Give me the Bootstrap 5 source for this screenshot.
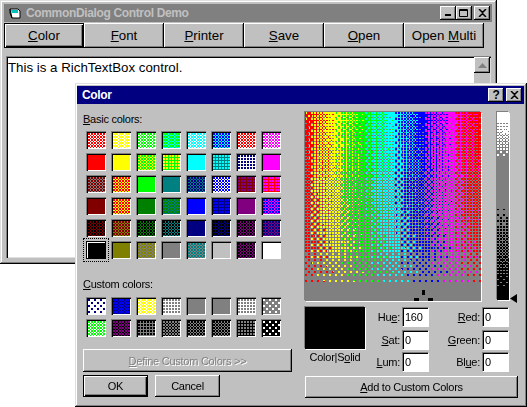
<!DOCTYPE html>
<html lang="en">
<head>
  <meta charset="UTF-8">
  <meta name="viewport" content="width=device-width, initial-scale=1.0">
  <title>CommonDialog Control Demo</title>
  <link href="https://cdn.jsdelivr.net/npm/bootstrap@5.3.3/dist/css/bootstrap.min.css" rel="stylesheet">
  <style>
    body {
      background: #fff;
      font-family: "Liberation Sans", Arial, sans-serif;
      font-size: 11px;
      line-height: 14px;
      color: #000;
      overflow: hidden;
    }
    .win-main, .win-color {
      position: absolute;
      background: #c0c0c0;
      box-shadow: inset -1px -1px 0 #000, inset 1px 1px 0 #dfdfdf, inset -2px -2px 0 #808080, inset 2px 2px 0 #fff;
    }
    .win-main { left: 0; top: 0; width: 497px; height: 264px; padding: 4px; }
    .win-color { left: 75px; top: 83px; width: 452px; height: 324px; padding: 3px 3px 3px 2px; letter-spacing: -.25px; }
    .title-bar { height: 18px; padding: 0 2px 0 5px; font-size: 12px; font-weight: 700; letter-spacing: -.35px; }
    .title-off { background: #808080; color: #c0c0c0; width: 488px; }
    .title-on { background: #000080; color: #fff; }
    .cap-btn {
      width: 16px; height: 14px; background: #c0c0c0; color: #000;
      box-shadow: inset -1px -1px 0 #000, inset 1px 1px 0 #fff, inset -2px -2px 0 #808080;
    }
    .cap-gap { margin-left: 2px; }
    .win-btn.btn {
      --bs-btn-padding-x: 0;
      --bs-btn-padding-y: 0;
      --bs-btn-font-size: 11px;
      --bs-btn-line-height: 14px;
      --bs-btn-color: #000;
      --bs-btn-bg: #c0c0c0;
      --bs-btn-border-width: 0;
      --bs-btn-border-radius: 0;
      box-shadow: inset -1px -1px 0 #000, inset 1px 1px 0 #fff, inset -2px -2px 0 #808080;
    }
    .win-color .win-btn.btn { letter-spacing: -.25px; }
    .win-btn.btn.is-default { box-shadow: inset 0 0 0 1px #000, inset 2px 2px 0 #fff, inset -2px -2px 0 #000, inset -3px -3px 0 #808080; }
    .win-btn.btn:disabled { --bs-btn-disabled-color: #808080; --bs-btn-disabled-bg: #c0c0c0; --bs-btn-disabled-opacity: 1; --bs-btn-disabled-border-color: transparent; text-shadow: 1px 1px 0 #fff; }
    .tool-row { height: 25px; margin-top: 1px; width: 480px; }
    .tool-row .win-btn.btn { width: 80px; height: 25px; --bs-btn-font-size: 13.3px; }
    .rich-box {
      margin: 8px 0 0 2px; height: 202px; width: 485px; background: #fff;
      box-shadow: inset 1px 1px 0 #808080, inset 2px 2px 0 #000, inset -1px -1px 0 #dfdfdf;
      padding: 3px 0 0 2px; font-size: 13.3px; line-height: 17px;
      position: relative;
    }
    .scroll-up {
      position: absolute; right: 1px; top: 1px; width: 16px; height: 16px; background: #c0c0c0;
      box-shadow: inset -1px -1px 0 #000, inset 1px 1px 0 #fff, inset -2px -2px 0 #808080;
    }
    .scroll-track { position: absolute; right: 1px; top: 17px; bottom: 1px; width: 16px; background: #c0c0c0; }
    .dlg-body { padding: 8px 0 0 6px; }
    .col-left { width: 209px; }
    .col-right { width: 213px; margin-left: 13px; }
    .sw-label { height: 14px; }
    .custom-label { margin-top: 18px; }
    .swatch-grid { display: grid; grid-template-columns: repeat(8, 20px); column-gap: 5px; row-gap: 4px; margin-top: 5px; margin-left: 3px; }
    .custom-label + .swatch-grid { margin-top: 6px; }
    .swatch-cell {
      width: 20px; height: 18px; padding: 2px 1px 1px 2px;
      box-shadow: inset 1px 1px 0 #808080, inset 2px 2px 0 #000, inset -1px -1px 0 #fff;
    }
    .swatch-cell.is-current { outline: 1px dotted #000; outline-offset: 2px; box-shadow: inset 0 0 0 1px #000, inset 0 0 0 2px #fff; }
    .swatch-fill { display: block; }
    .define-btn.btn { width: 209px; height: 23px; margin-top: 12px; }
    .btn-line { margin-top: 3px; gap: 7px; }
    .btn-line .win-btn.btn { width: 65px; height: 22px; }
    .picker-row { gap: 16px; }
    .spectrum-wrap { position: relative; width: 176px; height: 189px; box-shadow: -1px -1px 0 #808080, 1px 1px 0 #fff; }
    .spectrum-wrap canvas, .lum-wrap canvas { display: block; }
    .cross { position: absolute; background: #000; }
    .cross-v { left: 117px; top: 178px; width: 3px; height: 5px; }
    .cross-l { left: 109px; top: 186px; width: 5px; height: 3px; }
    .cross-r { left: 123px; top: 186px; width: 5px; height: 3px; }
    .lum-wrap { position: relative; width: 12px; height: 188px; box-shadow: -1px -1px 0 #808080, 1px 1px 0 #fff; }
    .lum-arrow { position: absolute; left: 13px; top: 182px; }
    .solid-col { width: 60px; margin-right: 8px; }
    .solid-box { width: 60px; height: 42px; background: #000; box-shadow: -1px -1px 0 #808080, 1px 1px 0 #fff; }
    .solid-label { margin-top: 1px; text-align: center; white-space: nowrap; }
    .field-row { height: 19px; margin-bottom: 3.5px; }
    .field-lab { text-align: right; margin-right: 2px; padding-top: 3px; white-space: nowrap; }
    .lab-a { width: 27px; }
    .lab-b { width: 52px; }
    .field-box {
      width: 26px; height: 19px; background: #fff; padding: 3px 0 0 3px;
      box-shadow: inset 1px 1px 0 #808080, inset 2px 2px 0 #000, 1px 1px 0 #fff;
    }
    .hsl-grid { margin-top: 6px; }
    .add-btn.btn { width: 213px; height: 22px; margin-top: 1px; }
  </style>
</head>
<body>

  <div class="win-main">
    <div class="title-bar title-off d-flex align-items-center">
      <svg width="13" height="12" viewBox="0 0 13 12" class="flex-shrink-0 me-1">
        <path d="M1 2h8l2 2v7H3z" fill="#fff" stroke="#000"/>
        <path d="M2 3h7v3H3z" fill="#00c0c0"/>
        <path d="M1 2v4l2 5" fill="none" stroke="#000"/>
      </svg>
      <span>CommonDialog Control Demo</span>
      <div class="ms-auto d-flex">
        <div class="cap-btn d-flex align-items-end justify-content-center pb-1"><svg width="7" height="2"><rect width="6" height="2"/></svg></div>
        <div class="cap-btn d-flex align-items-center justify-content-center"><svg width="10" height="9"><path d="M.5.5h8v7h-8zM0 1.500h9" fill="none" stroke="#000"/></svg></div>
        <div class="cap-btn cap-gap d-flex align-items-center justify-content-center"><svg width="9" height="8"><path d="M1 0l3.500 3.500L8 0M1 8l3.500-3.500L8 8" fill="none" stroke="#000" stroke-width="1.500"/></svg></div>
      </div>
    </div>
    <div class="tool-row d-flex">
      <button class="btn win-btn is-default"><u>C</u>olor</button>
      <button class="btn win-btn"><u>F</u>ont</button>
      <button class="btn win-btn"><u>P</u>rinter</button>
      <button class="btn win-btn"><u>S</u>ave</button>
      <button class="btn win-btn"><u>O</u>pen</button>
      <button class="btn win-btn">Open <u>M</u>ulti</button>
    </div>
    <div class="rich-box">
      This is a RichTextBox control.
      <div class="scroll-up d-flex align-items-center justify-content-center"><svg width="9" height="5"><path d="M4.500 0L9 5H0z" fill="#808080"/></svg></div>
      <div class="scroll-track"></div>
    </div>
  </div>

  <div class="win-color">
    <div class="title-bar title-on d-flex align-items-center">
      <span>Color</span>
      <div class="ms-auto d-flex">
        <div class="cap-btn d-flex align-items-center justify-content-center">?</div>
        <div class="cap-btn cap-gap d-flex align-items-center justify-content-center"><svg width="9" height="8"><path d="M1 0l3.500 3.500L8 0M1 8l3.500-3.500L8 8" fill="none" stroke="#000" stroke-width="1.500"/></svg></div>
      </div>
    </div>
    <div class="dlg-body d-flex">
      <div class="col-left">
        <div class="sw-label"><u>B</u>asic colors:</div>
        <div class="swatch-grid" id="basicGrid"></div>
        <div class="sw-label custom-label"><u>C</u>ustom colors:</div>
        <div class="swatch-grid" id="customGrid"></div>
        <button class="btn win-btn define-btn d-block" disabled><u>D</u>efine Custom Colors &gt;&gt;</button>
        <div class="d-flex btn-line">
          <button class="btn win-btn is-default">OK</button>
          <button class="btn win-btn">Cancel</button>
        </div>
      </div>
      <div class="col-right">
        <div class="d-flex picker-row">
          <div class="spectrum-wrap">
            <canvas id="spectrum" width="176" height="189"></canvas>
            <div class="cross cross-v"></div>
            <div class="cross cross-l"></div>
            <div class="cross cross-r"></div>
          </div>
          <div class="lum-wrap">
            <canvas id="lum" width="12" height="188"></canvas>
            <svg class="lum-arrow" width="7" height="9"><path d="M0 4.500L7 0v9z" fill="#000"/></svg>
          </div>
        </div>
        <div class="d-flex hsl-grid">
          <div class="solid-col">
            <div class="solid-box"></div>
            <div class="solid-label">Color|S<u>o</u>lid</div>
          </div>
          <div>
            <div class="field-row d-flex"><div class="field-lab lab-a">Hu<u>e</u>:</div><div class="field-box">160</div><div class="field-lab lab-b"><u>R</u>ed:</div><div class="field-box">0</div></div>
            <div class="field-row d-flex"><div class="field-lab lab-a"><u>S</u>at:</div><div class="field-box">0</div><div class="field-lab lab-b"><u>G</u>reen:</div><div class="field-box">0</div></div>
            <div class="field-row d-flex"><div class="field-lab lab-a"><u>L</u>um:</div><div class="field-box">0</div><div class="field-lab lab-b">Bl<u>u</u>e:</div><div class="field-box">0</div></div>
          </div>
        </div>
        <button class="btn win-btn add-btn d-block"><u>A</u>dd to Custom Colors</button>
      </div>
    </div>
  </div>

  <script>
    const R = "#ff0000", Y = "#ffff00", L = "#00ff00", C = "#00ffff", B = "#0000ff", M = "#ff00ff";
    const m = "#800000", o = "#808000", g = "#008000", t = "#008080", n = "#000080", p = "#800080";
    const W = "#ffffff", S = "#c0c0c0", G = "#808080", K = "#000000";

    // [base, second, pattern] c = checker, d = one dot in four, s = sparse dots
    const basic = [
      [R,W,"c"],[Y,W,"c"],[L,W,"c"],[L,C,"c"],[C,W,"c"],[B,C,"c"],[R,W,"c"],[M,W,"c"],
      [R],[Y],[L,Y,"c"],[L,Y,"d"],[C],[t,C,"d"],[W,n,"d"],[M],
      [m,G,"c"],[R,Y,"c"],[L],[t],[n,t,"c"],[B,W,"c"],[m,p,"d"],[R,M,"d"],
      [m],[R,Y,"c"],[g],[g,t,"c"],[B],[n,B,"d"],[p],[B,M,"c"],
      [K,m,"c"],[m,o,"c"],[K,g,"c"],[K,t,"c"],[n],[K,n,"c"],[K,p,"c"],[n,p,"c"],
      [K],[o],[o,G,"c"],[G],[t,G,"c"],[S],[K,p,"c"],[W]
    ];
    const custom = [
      [W,n,"s"],[B,n,"c"],[Y,W,"c"],[W,G,"d"],[G],[G],[W,G,"d"],[G,W,"s"],
      [L,W,"c"],[p,K,"c"],[G,K,"d"],[G,K,"c"],[K,G,"c"],[K,G,"c"],[K,G,"d"],[K,W,"s"]
    ];

    // the screenshot was resized, so the dither cells come out about 1.5px wide
    const cellOf = v => Math.floor(v / 1.5);

    function fillGrid(id, list, currentIdx) {
      const grid = document.getElementById(id);
      list.forEach((sw, i) => {
        const cell = document.createElement("div");
        cell.className = "swatch-cell" + (i === currentIdx ? " is-current" : "");
        const cv = document.createElement("canvas");
        cv.className = "swatch-fill";
        cv.width = 17;
        cv.height = 15;
        const ctx = cv.getContext("2d");
        for (let y = 0; y < 15; y++) {
          for (let x = 0; x < 17; x++) {
            const cx = cellOf(x), cy = cellOf(y);
            let second = false;
            if (sw[2] === "c") second = (cx + cy) % 2 === 1;
            if (sw[2] === "d") second = cx % 2 === 0 && cy % 2 === 0;
            if (sw[2] === "s") second = cx % 2 === 0 && cy % 2 === 0 && (cx + cy) % 4 === 0;
            ctx.fillStyle = second ? sw[1] : sw[0];
            ctx.fillRect(x, y, 1, 1);
          }
        }
        cell.appendChild(cv);
        grid.appendChild(cell);
      });
    }
    fillGrid("basicGrid", basic, 40);
    fillGrid("customGrid", custom, -1);

    const bayer = [[0,8,2,10],[12,4,14,6],[3,11,1,9],[15,7,13,5]];
    const hues = [[255,0,0],[255,255,0],[0,255,0],[0,255,255],[0,0,255],[255,0,255],[255,0,0]];

    function drawSpectrum() {
      const cv = document.getElementById("spectrum");
      const ctx = cv.getContext("2d");
      const img = ctx.createImageData(cv.width, cv.height);
      for (let y = 0; y < cv.height; y++) {
        for (let x = 0; x < cv.width; x++) {
          const th = (bayer[cellOf(y) % 4][cellOf(x) % 4] + .5) / 16;
          const pos = x / cv.width * 6;
          const i = Math.floor(pos);
          const sat = y > 181 ? 0 : Math.min(1, .96 - y / 185);
          let col = [128, 128, 128];
          if (sat > th) col = (pos - i) > th / sat ? hues[i + 1] : hues[i];
          const k = (y * cv.width + x) * 4;
          img.data[k] = col[0]; img.data[k + 1] = col[1]; img.data[k + 2] = col[2]; img.data[k + 3] = 255;
        }
      }
      ctx.putImageData(img, 0, 0);
    }

    function drawLum() {
      const cv = document.getElementById("lum");
      const ctx = cv.getContext("2d");
      for (let y = 0; y < cv.height; y++) {
        const v = 1 - y / cv.height;
        for (let x = 0; x < cv.width; x++) {
          const th = (bayer[cellOf(y) % 4][cellOf(x) % 4] + .5) / 16;
          let col = "#808080";
          if (v > .75) col = (v - .75) * 4.4 > th ? "#fff" : "#808080";
          else if (v < .5) col = (.5 - v) * 2.2 > th ? "#000" : "#808080";
          ctx.fillStyle = col;
          ctx.fillRect(x, y, 1, 1);
        }
      }
      ctx.strokeStyle = "#fff";
      ctx.strokeRect(6.5, 16.5, 4, 4);
    }
    drawSpectrum();
    drawLum();
  </script>
</body>
</html>
